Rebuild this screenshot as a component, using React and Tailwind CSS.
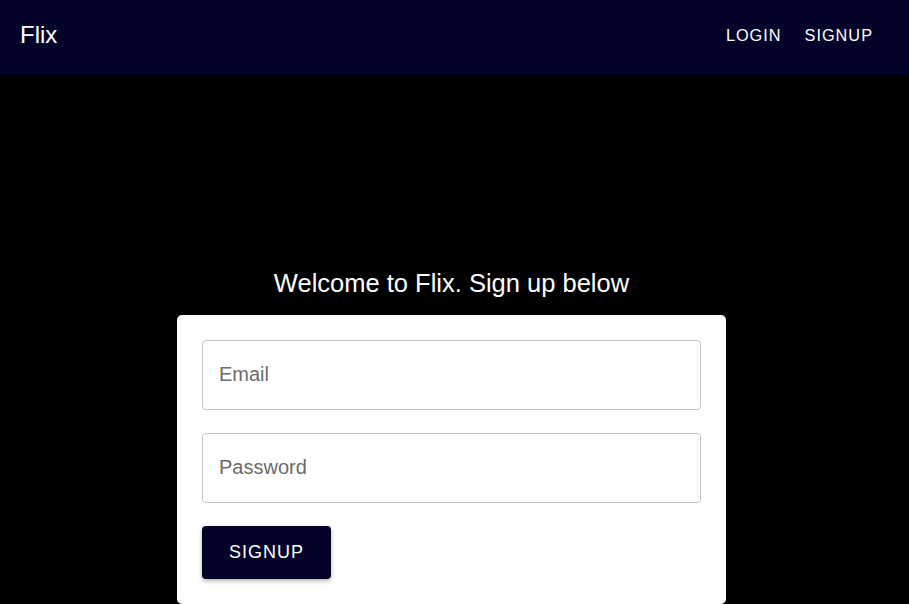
export default function App() {
  return (
    <div className="min-h-[604px] bg-black" style={{ fontFamily: '"Liberation Sans", Arial, sans-serif' }}>
      <header className="h-[75px] bg-[#030229] flex items-center justify-between pl-5 pr-9 pb-[5px]">
        <div className="text-white text-[24px]">Flix</div>
        <nav className="flex items-center gap-[23px] text-white text-[16.3px] tracking-[1px] pt-[1px]">
          <span>LOGIN</span>
          <span>SIGNUP</span>
        </nav>
      </header>
      <main className="flex flex-col items-center pt-[192px] pr-[6px]">
        <h1 className="text-white text-[25.5px] leading-[32px] mb-[16px]">Welcome to Flix. Sign up below</h1>
        <div className="w-[549px] bg-white rounded-[5px] p-[25px] flex flex-col gap-[23px]">
          <div className="h-[70px] border border-[#c4c4c4] rounded-[4px] flex items-center px-[16px] pb-[3px] text-[20px] text-[#6b6b6b]">Email</div>
          <div className="h-[70px] border border-[#c4c4c4] rounded-[4px] flex items-center px-[16px] pb-[3px] text-[20px] text-[#6b6b6b]">Password</div>
          <div>
            <button className="h-[53px] px-[27px] bg-[#030229] text-white text-[18px] tracking-[1px] rounded-[4px] shadow-[0_2px_4px_rgba(0,0,0,0.3)]">SIGNUP</button>
          </div>
        </div>
      </main>
    </div>
  );
}
